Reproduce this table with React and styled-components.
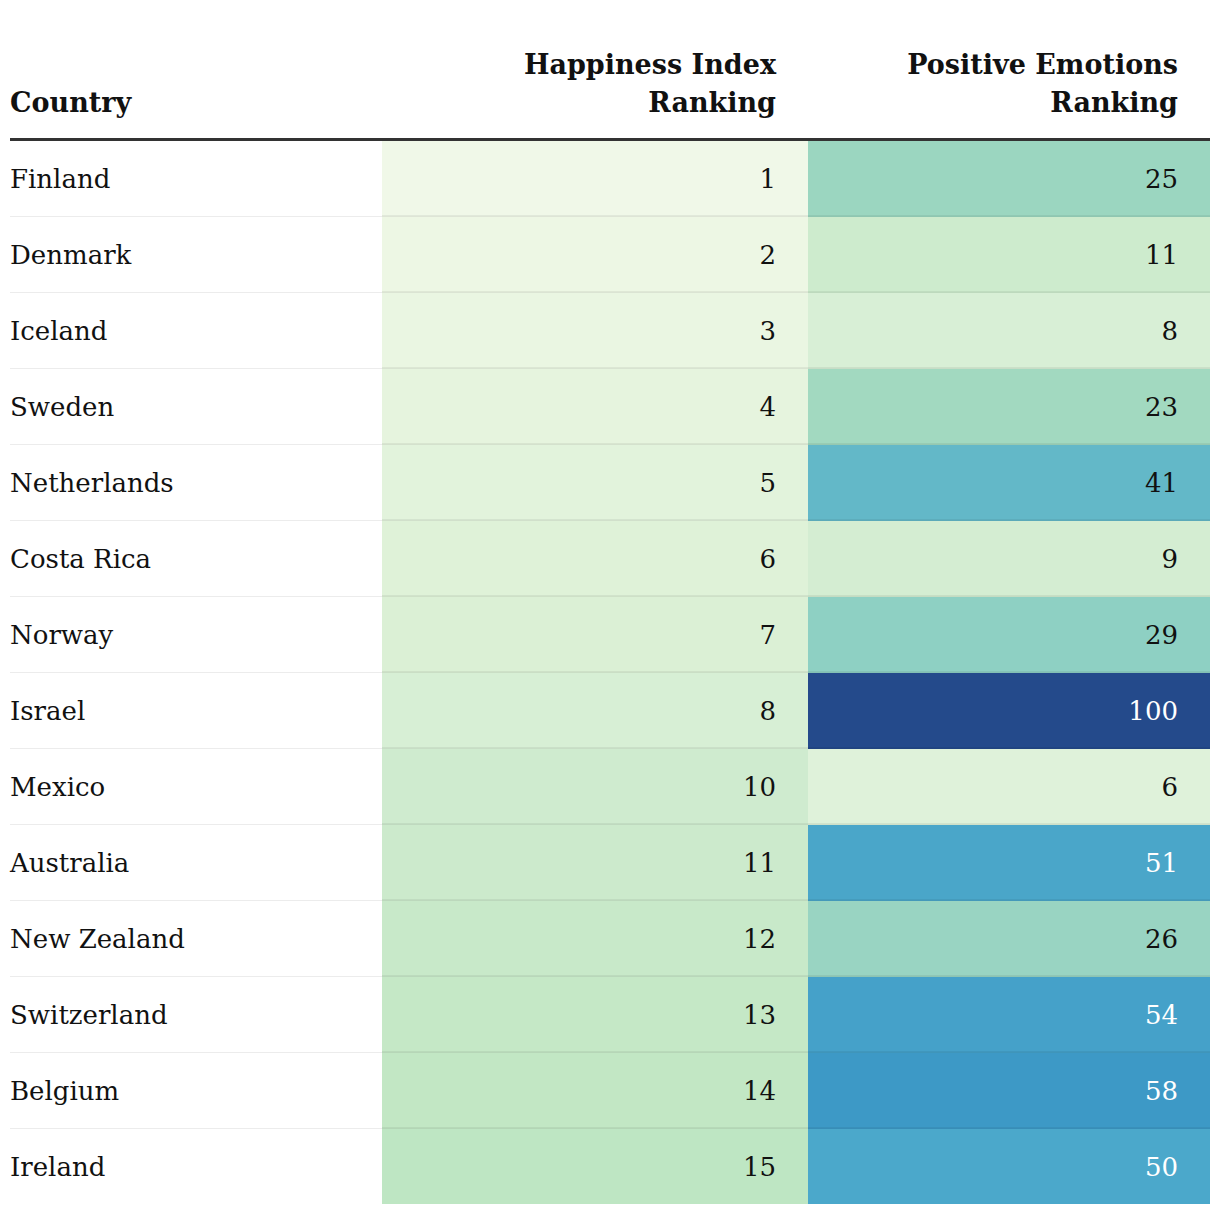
import React from "react";
import styled, { createGlobalStyle } from "styled-components";

const Global = createGlobalStyle`
  html, body { margin: 0; padding: 0; background: #fff; }
  body { font-family: "DejaVu Serif", "Liberation Serif", serif; color: #111; }
`;

const Wrap = styled.div`
  padding: 38px 10px 0 10px;
`;

const Table = styled.table`
  width: 1200px;
  border-collapse: collapse;
  table-layout: fixed;
  font-size: 26px;
`;

const HeadCell = styled.th`
  font-weight: 700;
  font-size: 27px;
  line-height: 38px;
  text-align: ${(p) => (p.$num ? "right" : "left")};
  padding: 8px ${(p) => (p.$num ? "32px" : "0")} 16px 0;
  vertical-align: bottom;
  border-bottom: 3px solid #333;
`;

const Row = styled.tr`
  border-bottom: 1px solid rgba(0, 0, 0, 0.075);
  &:last-child { border-bottom: none; }
`;

const Cell = styled.td`
  height: 75px;
  padding: 0 ${(p) => (p.$num ? "32px" : "0")} 0 0;
  text-align: ${(p) => (p.$num ? "right" : "left")};
  background: ${(p) => p.$bg || "transparent"};
  color: ${(p) => (p.$light ? "#fff" : "#111")};
  font-variant-numeric: tabular-nums;
  vertical-align: middle;
  box-shadow: ${(p) => (p.$num ? "inset 0 -1px 0 rgba(0,0,0,0.06)" : "none")};
  tr:last-child > & { box-shadow: none; }
`;

const rows = [
  ["Finland", 1, "#f0f8e8", 25, "#9bd6c0", false],
  ["Denmark", 2, "#edf7e4", 11, "#cdebcd", false],
  ["Iceland", 3, "#eaf6e2", 8, "#d8efd6", false],
  ["Sweden", 4, "#e6f4de", 23, "#a2d9c0", false],
  ["Netherlands", 5, "#e2f3dc", 41, "#63b8c8", false],
  ["Costa Rica", 6, "#dff2d8", 9, "#d4edd2", false],
  ["Norway", 7, "#dbf0d5", 29, "#8ed0c3", false],
  ["Israel", 8, "#d7efd5", 100, "#244a8b", true],
  ["Mexico", 10, "#cfebcf", 6, "#dff2da", false],
  ["Australia", 11, "#cceacc", 51, "#4aa6c9", true],
  ["New Zealand", 12, "#c8e9c9", 26, "#99d4c2", false],
  ["Switzerland", 13, "#c5e8c6", 54, "#45a1c9", true],
  ["Belgium", 14, "#c2e7c4", 58, "#3d99c6", true],
  ["Ireland", 15, "#bee6c3", 50, "#4ba8cb", true],
];

export default function App() {
  return (
    <>
      <Global />
      <Wrap>
        <Table>
          <colgroup>
            <col style={{ width: 372 }} />
            <col style={{ width: 426 }} />
            <col style={{ width: 402 }} />
          </colgroup>
          <thead>
            <tr>
              <HeadCell>Country</HeadCell>
              <HeadCell $num>Happiness Index<br />Ranking</HeadCell>
              <HeadCell $num>Positive Emotions<br />Ranking</HeadCell>
            </tr>
          </thead>
          <tbody>
            {rows.map(([c, h, hb, p, pb, light]) => (
              <Row key={c}>
                <Cell>{c}</Cell>
                <Cell $num $bg={hb}>{h}</Cell>
                <Cell $num $bg={pb} $light={light}>{p}</Cell>
              </Row>
            ))}
          </tbody>
        </Table>
      </Wrap>
    </>
  );
}
